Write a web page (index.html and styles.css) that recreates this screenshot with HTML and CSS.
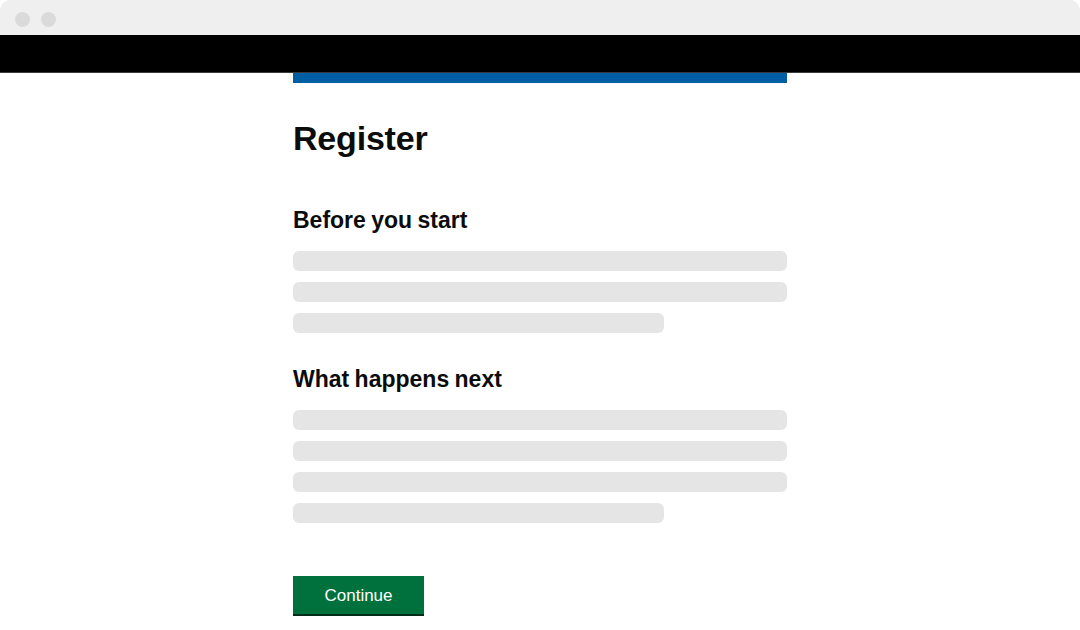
FILE: index.html
```html
<!DOCTYPE html>
<html lang="en">
<head>
    <meta charset="UTF-8">
    <meta name="viewport" content="width=device-width, initial-scale=1.0">
    <title>Register</title>
    <link rel="stylesheet" href="styles.css">
</head>
<body>
    <div class="browser-bar">
        <span class="dot"></span>
        <span class="dot"></span>
    </div>
    <header class="site-header"></header>

    <main class="page">
        <div class="phase-bar"></div>
        <h1>Register</h1>

        <h2>Before you start</h2>
        <div class="line"></div>
        <div class="line"></div>
        <div class="line short"></div>

        <h2>What happens next</h2>
        <div class="line"></div>
        <div class="line"></div>
        <div class="line"></div>
        <div class="line short"></div>

        <button class="button">Continue</button>
    </main>
</body>
</html>
```

FILE: styles.css
```css
body {
    margin: 0;
    background: #fff;
    font-family: "Liberation Sans", Arial, sans-serif;
    color: #0b0c0c;
}
.browser-bar {
    height: 35px;
    background: #efefef;
    border-radius: 11px 11px 0 0;
    display: flex;
    align-items: center;
    gap: 11px;
    padding-left: 15px;
    padding-top: 4px;
    box-sizing: border-box;
}
.dot {
    width: 15px;
    height: 15px;
    border-radius: 50%;
    background: #dadada;
}
.site-header {
    height: 37px;
    background: #000;
    border-bottom: 1px solid #3a3a3a;
}
.page {
    width: 494px;
    margin: 0 auto;
}
.phase-bar {
    height: 10px;
    background: #005ea5;
}
h1 {
    font-size: 34px;
    line-height: 40px;
    font-weight: bold;
    margin: 35px 0 0;
    letter-spacing: -0.2px;
}
h2 {
    font-size: 23px;
    line-height: 28px;
    font-weight: bold;
    margin: 48px 0 17px;
    word-spacing: -1px;
}
.line + h2 {
    margin-top: 32px;
}
.line {
    height: 20px;
    background: #e5e5e5;
    border-radius: 6px;
    margin-bottom: 11px;
}
.line.short {
    width: 75%;
}
.button {
    display: block;
    box-sizing: border-box;
    margin-top: 53px;
    width: 131px;
    height: 40px;
    padding: 1px 0 0;
    background: #00703c;
    color: #fff;
    border: none;
    border-bottom: 2px solid #002d18;
    border-radius: 0;
    font-family: "Liberation Sans", Arial, sans-serif;
    font-size: 17px;
    line-height: 37px;
    text-align: center;
    cursor: pointer;
}
```
